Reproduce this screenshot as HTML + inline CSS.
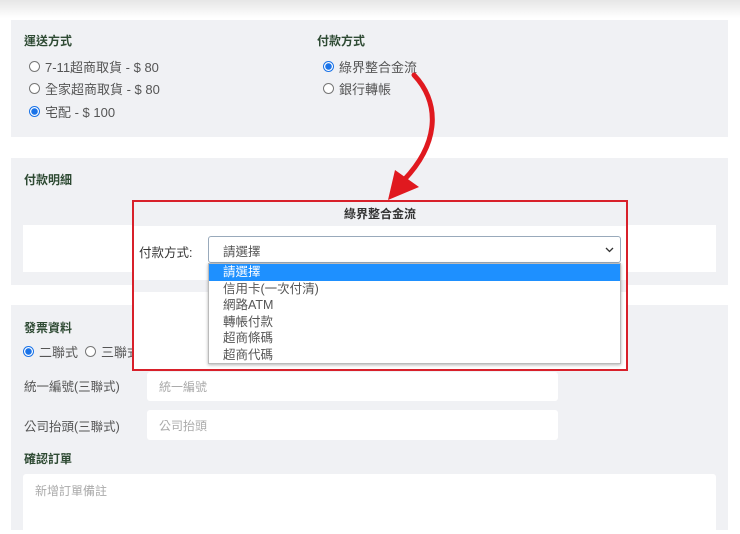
<!DOCTYPE html>
<html><head><meta charset="utf-8"><style>
*{box-sizing:border-box;margin:0;padding:0}
body{width:740px;height:530px;overflow:hidden;background:#fff;font-family:"Liberation Sans","Noto Sans CJK TC",sans-serif;font-size:13px;color:#555;position:relative}
.a{position:absolute}
.panel{position:absolute;left:11px;width:717px;background:#f0f1f4}
.h{position:absolute;color:#2e4a33;font-size:12px;font-weight:bold}
.r{position:absolute;display:flex;align-items:center;gap:5px;font-size:13px;color:#555}
.rd{width:11px;height:11px;border:1px solid #777;border-radius:50%;background:#fff;display:inline-block}
.rd.on{border:1px solid #1a73e8;background:radial-gradient(circle,#1a73e8 3px,#fff 3.5px)}
.inp{position:absolute;background:#fff;border-radius:3px;color:#aaa;font-size:12px;padding-left:12px;display:flex;align-items:center}
.opt{height:16.6px;line-height:16.6px;padding-left:14px;font-size:12.5px;color:#555}
</style></head><body>
<div class="a" style="left:0;top:0;width:740px;height:18px;background:linear-gradient(#e6e6e6,#fff)"></div>
<div class="panel" style="top:20px;height:117px"></div>
<div class="h" style="left:24px;top:32px">運送方式</div>
<div class="r" style="left:29px;top:57px"><span class="rd"></span>7-11超商取貨 - $ 80</div>
<div class="r" style="left:29px;top:79px"><span class="rd"></span>全家超商取貨 - $ 80</div>
<div class="r" style="left:29px;top:102px"><span class="rd on"></span>宅配 - $ 100</div>
<div class="h" style="left:317px;top:32px">付款方式</div>
<div class="r" style="left:323px;top:57px"><span class="rd on"></span>綠界整合金流</div>
<div class="r" style="left:323px;top:79px"><span class="rd"></span>銀行轉帳</div>

<div class="panel" style="top:158px;height:127px"></div>
<div class="h" style="left:24px;top:171px">付款明細</div>
<div class="a" style="left:23px;top:225px;width:693px;height:47px;background:#fff"></div>

<div class="panel" style="top:305px;height:225px"></div>
<div class="h" style="left:24px;top:319px">發票資料</div>
<div class="r" style="left:23px;top:342px"><span class="rd on"></span>二聯式 <span class="rd" style="margin-left:2px"></span>三聯式</div>
<div class="a" style="left:24px;top:376px;font-size:12.5px">統一編號(三聯式)</div>
<div class="inp" style="left:147px;top:372px;width:411px;height:29px">統一編號</div>
<div class="a" style="left:24px;top:416px;font-size:12.5px">公司抬頭(三聯式)</div>
<div class="inp" style="left:147px;top:410px;width:411px;height:30px">公司抬頭</div>
<div class="h" style="left:24px;top:450px">確認訂單</div>
<div class="inp" style="left:23px;top:474px;width:693px;height:60px;align-items:flex-start;padding-top:8px">新增訂單備註</div>

<div class="a" style="left:132px;top:200px;width:496px;height:171px;border:2px solid #d8202a;background:#fff">
 <div class="a" style="left:0;top:0;width:492px;height:24px;background:#f0f1f4"></div>
 <div class="a" style="left:0;top:3px;width:492px;text-align:center;font-size:12px;font-weight:bold;color:#333">綠界整合金流</div>
 <div class="a" style="left:0;top:78px;width:492px;height:12px;background:#f0f1f4"></div>
 <div class="a" style="left:5px;top:40px;font-size:12.5px;color:#333">付款方式:</div>
 <div class="a" style="left:74px;top:34px;width:413px;height:27px;border:1px solid #9ab;border-radius:3px;background:#fff;font-size:12.5px;color:#555;padding:4px 0 0 14px">請選擇<svg style="position:absolute;right:6px;top:10px" width="9" height="6"><path d="M1,1 L4.5,4.5 L8,1" fill="none" stroke="#333" stroke-width="1.3"/></svg></div>
 <div class="a" style="left:74px;top:61px;width:413px;height:101px;background:#fff;border:1px solid #bbb;box-shadow:0 1px 3px rgba(0,0,0,.3)">
  <div class="opt" style="background:#1e90ff;color:#fff">請選擇</div>
  <div class="opt">信用卡(一次付清)</div>
  <div class="opt">網路ATM</div>
  <div class="opt">轉帳付款</div>
  <div class="opt">超商條碼</div>
  <div class="opt">超商代碼</div>
 </div>
</div>
<svg class="a" style="left:0;top:0" width="740" height="530">
 <path d="M414,75 C438,100 442,140 404,180" fill="none" stroke="#e0191f" stroke-width="5" stroke-linecap="round"/>
 <polygon points="395,170 419,187 388,200" fill="#e0191f"/>
</svg>
</body></html>
